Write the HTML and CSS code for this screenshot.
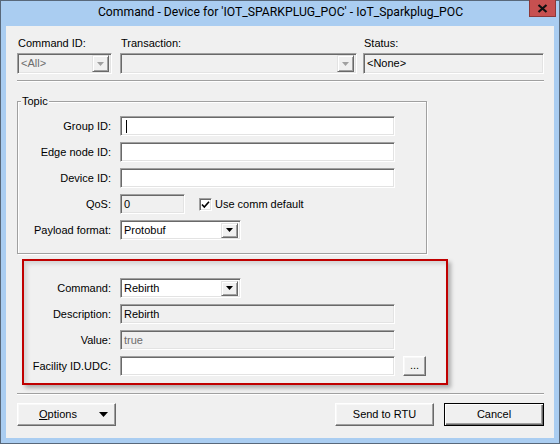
FILE: index.html
```html
<!DOCTYPE html>
<html>
<head>
<meta charset="utf-8">
<link rel="stylesheet" href="styles.css">
</head>
<body>
<div class="window">
  <div class="titlebar">
    <span class="title">Command - Device for 'IOT_SPARKPLUG_POC' - IoT_Sparkplug_POC</span>
    <div class="close"><svg width="11" height="9" viewBox="0 0 11 9"><path d="M1.5 1 L9.5 8 M9.5 1 L1.5 8" stroke="#111" stroke-width="2.2" fill="none"/></svg></div>
  </div>
  <div class="client">
    <div class="toprow">
      <div class="col c1">
        <div class="lbl">Command ID:</div>
        <div class="combo disabled"><span class="val">&lt;All&gt;</span><span class="dd"><svg width="7" height="4" viewBox="0 0 7 4"><polygon points="0,0 7,0 3.5,4" fill="#a0a0a0"/></svg></span></div>
      </div>
      <div class="col c2">
        <div class="lbl">Transaction:</div>
        <div class="combo disabled"><span class="val"></span><span class="dd"><svg width="7" height="4" viewBox="0 0 7 4"><polygon points="0,0 7,0 3.5,4" fill="#a0a0a0"/></svg></span></div>
      </div>
      <div class="col c3">
        <div class="lbl">Status:</div>
        <div class="edit readonly tall"><span class="val">&lt;None&gt;</span></div>
      </div>
    </div>
    <div class="sep"></div>
    <div class="group">
      <div class="group-title">Topic</div>
      <div class="form topic">
        <label>Group ID:</label>
        <div class="edit wide"><span class="caret"></span></div>
        <label>Edge node ID:</label>
        <div class="edit wide"></div>
        <label>Device ID:</label>
        <div class="edit wide"></div>
        <label>QoS:</label>
        <div class="qos-row">
          <div class="edit readonly qos"><span class="val">0</span></div>
          <div class="check"><svg width="9" height="9" viewBox="0 0 9 9"><polyline points="1,4.5 3.3,7 8,1.8" stroke="#000" stroke-width="1.6" fill="none"/></svg></div>
          <span class="check-label">Use comm default</span>
        </div>
        <label>Payload format:</label>
        <div class="combo enabled"><span class="val">Protobuf</span><span class="dd"><svg width="7" height="4" viewBox="0 0 7 4"><polygon points="0,0 7,0 3.5,4" fill="#000"/></svg></span></div>
      </div>
    </div>
    <div class="annot">
      <div class="form cmd">
        <label>Command:</label>
        <div class="combo enabled"><span class="val">Rebirth</span><span class="dd"><svg width="7" height="4" viewBox="0 0 7 4"><polygon points="0,0 7,0 3.5,4" fill="#000"/></svg></span></div>
        <label>Description:</label>
        <div class="edit readonly wide"><span class="val">Rebirth</span></div>
        <label>Value:</label>
        <div class="edit readonly wide"><span class="val grey">true</span></div>
        <label>Facility ID.UDC:</label>
        <div class="facility-row">
          <div class="edit wide"></div>
          <div class="btn small">...</div>
        </div>
      </div>
    </div>
    <div class="sep sep2"></div>
    <div class="buttons">
      <div class="btn options"><span><u>O</u>ptions</span><svg width="9" height="5" viewBox="0 0 9 5"><polygon points="0,0 9,0 4.5,5" fill="#000"/></svg></div>
      <div class="spacer"></div>
      <div class="btn send">Send to RTU</div>
      <div class="btn cancel default">Cancel</div>
    </div>
  </div>
</div>
</body>
</html>
```

FILE: styles.css
```css
html, body {
  margin: 0;
  padding: 0;
  background: #ffffff;
}

.window {
  width: 560px;
  height: 444px;
  box-sizing: border-box;
  border: 1px solid #58687a;
  background: #aacdf1;
  display: flex;
  flex-direction: column;
  font-family: "Liberation Sans", Arial, sans-serif;
  font-size: 11px;
  color: #000;
}

.titlebar {
  height: 25px;
  flex: none;
  position: relative;
  display: flex;
  align-items: center;
  justify-content: center;
}

.title {
  font-family: Roboto, "Noto Sans", sans-serif;
  font-size: 12.2px;
  color: #000;
  margin-top: -3px;
  margin-left: 1px;
}

.close {
  position: absolute;
  top: -1px;
  right: 3px;
  width: 27px;
  height: 17px;
  box-sizing: border-box;
  background: #c75050;
  border: 1px solid #8c3838;
  border-top: none;
  display: flex;
  align-items: center;
  justify-content: center;
}

.client {
  flex: 1;
  margin: 0 5px 5px;
  background: #f0f0f0;
  padding: 11px 10px 0 11px;
  display: flex;
  flex-direction: column;
}

.toprow {
  display: flex;
}

.col {
  display: flex;
  flex-direction: column;
}

.c1 { width: 95px; }
.c2 { width: 237px; margin-left: 8px; }
.c3 { width: 181px; margin-left: 6px; }

.lbl {
  line-height: 13px;
  height: 13px;
  margin-bottom: 3px;
  padding-left: 1px;
}

/* sunken field */
.edit, .combo {
  box-sizing: border-box;
  height: 20px;
  border-top: 1px solid #a0a0a0;
  border-left: 1px solid #a0a0a0;
  border-bottom: 1px solid #ffffff;
  border-right: 1px solid #ffffff;
  box-shadow: inset 1px 1px 0 #696969, inset -1px -1px 0 #e3e3e3;
  background: #ffffff;
  display: flex;
  align-items: center;
  padding: 0 2px 0 3px;
}

.tall, .toprow .combo { height: 21px; }

.readonly { background: #f0f0f0; }

.val {
  flex: 1;
  line-height: 13px;
  white-space: nowrap;
}

.grey { color: #6d6d6d; }

.combo.disabled { background: #f0f0f0; color: #6d6d6d; padding-right: 2px; }
.combo.enabled { padding-right: 2px; }

.dd {
  flex: none;
  width: 17px;
  height: 15px;
  box-sizing: border-box;
  border-top: 1px solid #e3e3e3;
  border-left: 1px solid #e3e3e3;
  border-right: 1px solid #696969;
  border-bottom: 1px solid #696969;
  box-shadow: inset 1px 1px 0 #ffffff, inset -1px -1px 0 #a0a0a0;
  background: #f0f0f0;
  display: flex;
  align-items: center;
  justify-content: center;
}

.toprow .dd { height: 17px; }

.caret {
  width: 1px;
  height: 13px;
  background: #000;
  margin-left: 2px;
}

.sep {
  height: 0;
  border-top: 1px solid #a0a0a0;
  border-bottom: 1px solid #ffffff;
  margin-top: 6px;
}

.sep2 { margin-top: 8px; }

.group {
  margin-top: 19px;
  width: 410px;
  box-sizing: border-box;
  border: 1px solid #a0a0a0;
  box-shadow: inset 1px 1px 0 #ffffff, 1px 1px 0 #ffffff;
  padding-bottom: 13px;
}

.group-title {
  width: fit-content;
  margin: -7px 0 0 3px;
  padding: 0 1px;
  line-height: 13px;
  background: #f0f0f0;
}

.form {
  display: grid;
  grid-auto-rows: 20px;
  row-gap: 6px;
  column-gap: 9px;
  align-items: center;
}

.form.topic {
  margin-top: 8px;
  grid-template-columns: 93px auto;
}

.form.cmd {
  grid-template-columns: 87px auto;
}

.form label {
  text-align: right;
  line-height: 13px;
}

.wide { width: 275px; }
.form .combo { width: 121px; }

.qos-row, .facility-row {
  display: flex;
  align-items: center;
}

.qos { width: 65px; }

.check {
  width: 13px;
  height: 13px;
  box-sizing: border-box;
  margin-left: 14px;
  border-top: 1px solid #a0a0a0;
  border-left: 1px solid #a0a0a0;
  border-right: 1px solid #ffffff;
  border-bottom: 1px solid #ffffff;
  box-shadow: inset 1px 1px 0 #696969, inset -1px -1px 0 #e3e3e3;
  background: #ffffff;
  display: flex;
  align-items: center;
  justify-content: center;
}

.check-label {
  margin-left: 3px;
  line-height: 13px;
}

.annot {
  margin-top: 5px;
  margin-left: 5px;
  width: 426px;
  box-sizing: border-box;
  border: 2px solid #c00000;
  box-shadow: 3px 3px 4px rgba(0, 0, 0, 0.28), inset 3px 3px 4px rgba(0, 0, 0, 0.12);
  padding: 17px 0 7px;
}

.btn {
  box-sizing: border-box;
  border-top: 1px solid #ffffff;
  border-left: 1px solid #ffffff;
  border-right: 1px solid #696969;
  border-bottom: 1px solid #696969;
  box-shadow: inset -1px -1px 0 #a0a0a0, inset 1px 1px 0 #f8f8f8;
  background: #f0f0f0;
  display: flex;
  align-items: center;
  justify-content: center;
  line-height: 13px;
}

.btn.small {
  width: 23px;
  height: 20px;
  margin-left: 8px;
  padding-bottom: 2px;
}

.buttons {
  display: flex;
  margin-top: 8px;
}

.buttons .btn {
  height: 23px;
  width: 99px;
}

.options {
  justify-content: space-between;
  padding: 0 7px 0 21px;
}

.spacer { flex: 1; }

.cancel {
  width: 100px !important;
  margin-left: 10px;
}

.btn.default {
  border: 1px solid #000;
  box-shadow: inset 1px 1px 0 #ffffff, inset -1px -1px 0 #696969, inset -2px -2px 0 #a0a0a0;
}
```
